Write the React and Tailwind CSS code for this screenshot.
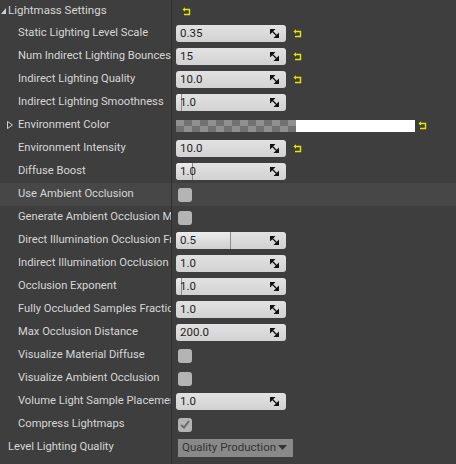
import React from 'react'

const font = { fontFamily: 'Roboto, "Liberation Sans", sans-serif' }

function ResetArrow() {
  return (
    <svg width="9" height="9" viewBox="0 0 9 9" className="shrink-0">
      <path d="M2 2.5 H7.5 V7.5 H2" fill="none" stroke="#e6e600" strokeWidth="1.4" />
      <path d="M0.5 2.5 L3 0.3 V4.7 Z" fill="#e6e600" />
    </svg>
  )
}

function SpinIcon() {
  return (
    <svg width="9" height="9" viewBox="0 0 9 9" className="shrink-0">
      <path d="M0 0 H5.5 L0 5.5 Z" fill="#111" />
      <path d="M9 9 H3.5 L9 3.5 Z" fill="#111" />
      <path d="M1 1 L8 8" stroke="#111" strokeWidth="1.2" />
    </svg>
  )
}

function NumberBox({ value, fill }) {
  return (
    <div className="relative flex h-[17px] w-[110px] items-center overflow-hidden rounded-[3px] bg-gradient-to-b from-[#e2e2e2] to-[#d2d2d2]">
      {fill != null && (
        <div
          className="absolute inset-y-0 left-0 border-r border-[#8c8c8c] bg-gradient-to-b from-[#ececec] to-[#cfcfcf]"
          style={{ width: fill }}
        />
      )}
      <span className="relative pl-[4px] text-[11.5px] text-[#1e1e1e]">{value}</span>
      <div className="relative ml-auto mr-[7px]">
        <SpinIcon />
      </div>
    </div>
  )
}

function Checkbox({ checked }) {
  return (
    <div className="ml-[2px] flex h-[14px] w-[14px] items-center justify-center rounded-[3px] bg-[#b4b4b4]">
      {checked && (
        <svg width="10" height="9" viewBox="0 0 10 9">
          <path d="M1 5 L4 7.5 L9 1" fill="none" stroke="#6a6a6a" strokeWidth="2" />
        </svg>
      )}
    </div>
  )
}

function ColorSwatch() {
  const cells = []
  for (let r = 0; r < 2; r++) {
    for (let c = 0; c < 15; c++) {
      cells.push(
        <div
          key={r + '-' + c}
          className={(r + c) % 2 === 0 ? 'bg-[#8f8f8f]' : 'bg-[#727272]'}
        />
      )
    }
  }
  return (
    <div className="flex h-[12px] items-stretch">
      <div className="grid w-[120px] grid-cols-[repeat(15,8px)] grid-rows-2">{cells}</div>
      <div className="w-[119px] bg-white" />
    </div>
  )
}

function Row({ label, indent = true, highlight, children }) {
  return (
    <div className={`flex h-[23px] items-center ${highlight ? 'bg-[#474747]' : ''}`}>
      <div
        className={`flex h-full w-[171px] shrink-0 items-center overflow-hidden whitespace-nowrap text-[11.2px] text-[#d6d6d6] ${
          indent ? 'pl-[18px]' : 'pl-[8px]'
        }`}
      >
        {label}
      </div>
      <div className="h-full w-px shrink-0 bg-[#2e2e2e]" />
      <div className="flex h-full items-center gap-[7px] pl-[4px]">{children}</div>
    </div>
  )
}

const rows = [
  { label: 'Static Lighting Level Scale', kind: 'num', value: '0.35', reset: true },
  { label: 'Num Indirect Lighting Bounces', kind: 'num', value: '15', reset: true },
  { label: 'Indirect Lighting Quality', kind: 'num', value: '10.0', reset: true },
  { label: 'Indirect Lighting Smoothness', kind: 'num', value: '1.0', fill: 6 },
  { label: 'Environment Color', kind: 'color' },
  { label: 'Environment Intensity', kind: 'num', value: '10.0', reset: true },
  { label: 'Diffuse Boost', kind: 'num', value: '1.0', fill: 17 },
  { label: 'Use Ambient Occlusion', kind: 'check', highlight: true },
  { label: 'Generate Ambient Occlusion Material', kind: 'check' },
  { label: 'Direct Illumination Occlusion Fraction', kind: 'num', value: '0.5', fill: 55 },
  { label: 'Indirect Illumination Occlusion Fraction', kind: 'num', value: '1.0' },
  { label: 'Occlusion Exponent', kind: 'num', value: '1.0', fill: 6 },
  { label: 'Fully Occluded Samples Fraction', kind: 'num', value: '1.0' },
  { label: 'Max Occlusion Distance', kind: 'num', value: '200.0' },
  { label: 'Visualize Material Diffuse', kind: 'check' },
  { label: 'Visualize Ambient Occlusion', kind: 'check' },
  { label: 'Volume Light Sample Placement Scale', kind: 'num', value: '1.0' },
  { label: 'Compress Lightmaps', kind: 'check', checked: true },
]

export default function App() {
  return (
    <div className="h-[464px] w-[456px] overflow-hidden bg-[#3e3e3e]" style={font}>
      {/* Header */}
      <div className="flex h-[22px] items-center">
        <div className="flex h-full w-[171px] shrink-0 items-center">
          <svg width="5" height="6" viewBox="0 0 5 6" className="ml-[1px]">
            <path d="M5 0 V6 H0 Z" fill="#cfcfcf" />
          </svg>
          <span className="ml-[2px] text-[11.5px] text-[#d6d6d6]">Lightmass Settings</span>
        </div>
        <div className="h-full w-px bg-[#2e2e2e]" />
        <div className="pl-[10px]">
          <ResetArrow />
        </div>
      </div>

      {rows.map((r) => (
        <Row
          key={r.label}
          highlight={r.highlight}
          label={
            r.kind === 'color' ? (
              <span className="-ml-[11px] flex items-center gap-[5px]">
                <svg width="6" height="8" viewBox="0 0 6 8">
                  <path d="M0.5 0.5 L5.5 4 L0.5 7.5 Z" fill="none" stroke="#cfcfcf" strokeWidth="1" />
                </svg>
                {r.label}
              </span>
            ) : (
              r.label
            )
          }
        >
          {r.kind === 'num' && <NumberBox value={r.value} fill={r.fill} />}
          {r.kind === 'check' && <Checkbox checked={r.checked} />}
          {r.kind === 'color' && (
            <div className="flex items-center gap-[3px]">
              <ColorSwatch />
              <ResetArrow />
            </div>
          )}
          {r.reset && <ResetArrow />}
        </Row>
      ))}

      <Row label="Level Lighting Quality" indent={false}>
        <div className="ml-[2px] flex h-[18px] w-[115px] items-center gap-[2px] bg-[#898989] pl-[4px] text-[11.5px] text-[#333333]">
          Quality Production
          <svg width="9" height="5" viewBox="0 0 9 5">
            <path d="M0 0 H9 L4.5 5 Z" fill="#333333" />
          </svg>
        </div>
      </Row>
      <div className="flex h-[6px]">
        <div className="w-[171px]" />
        <div className="w-px bg-[#2e2e2e]" />
      </div>
    </div>
  )
}
